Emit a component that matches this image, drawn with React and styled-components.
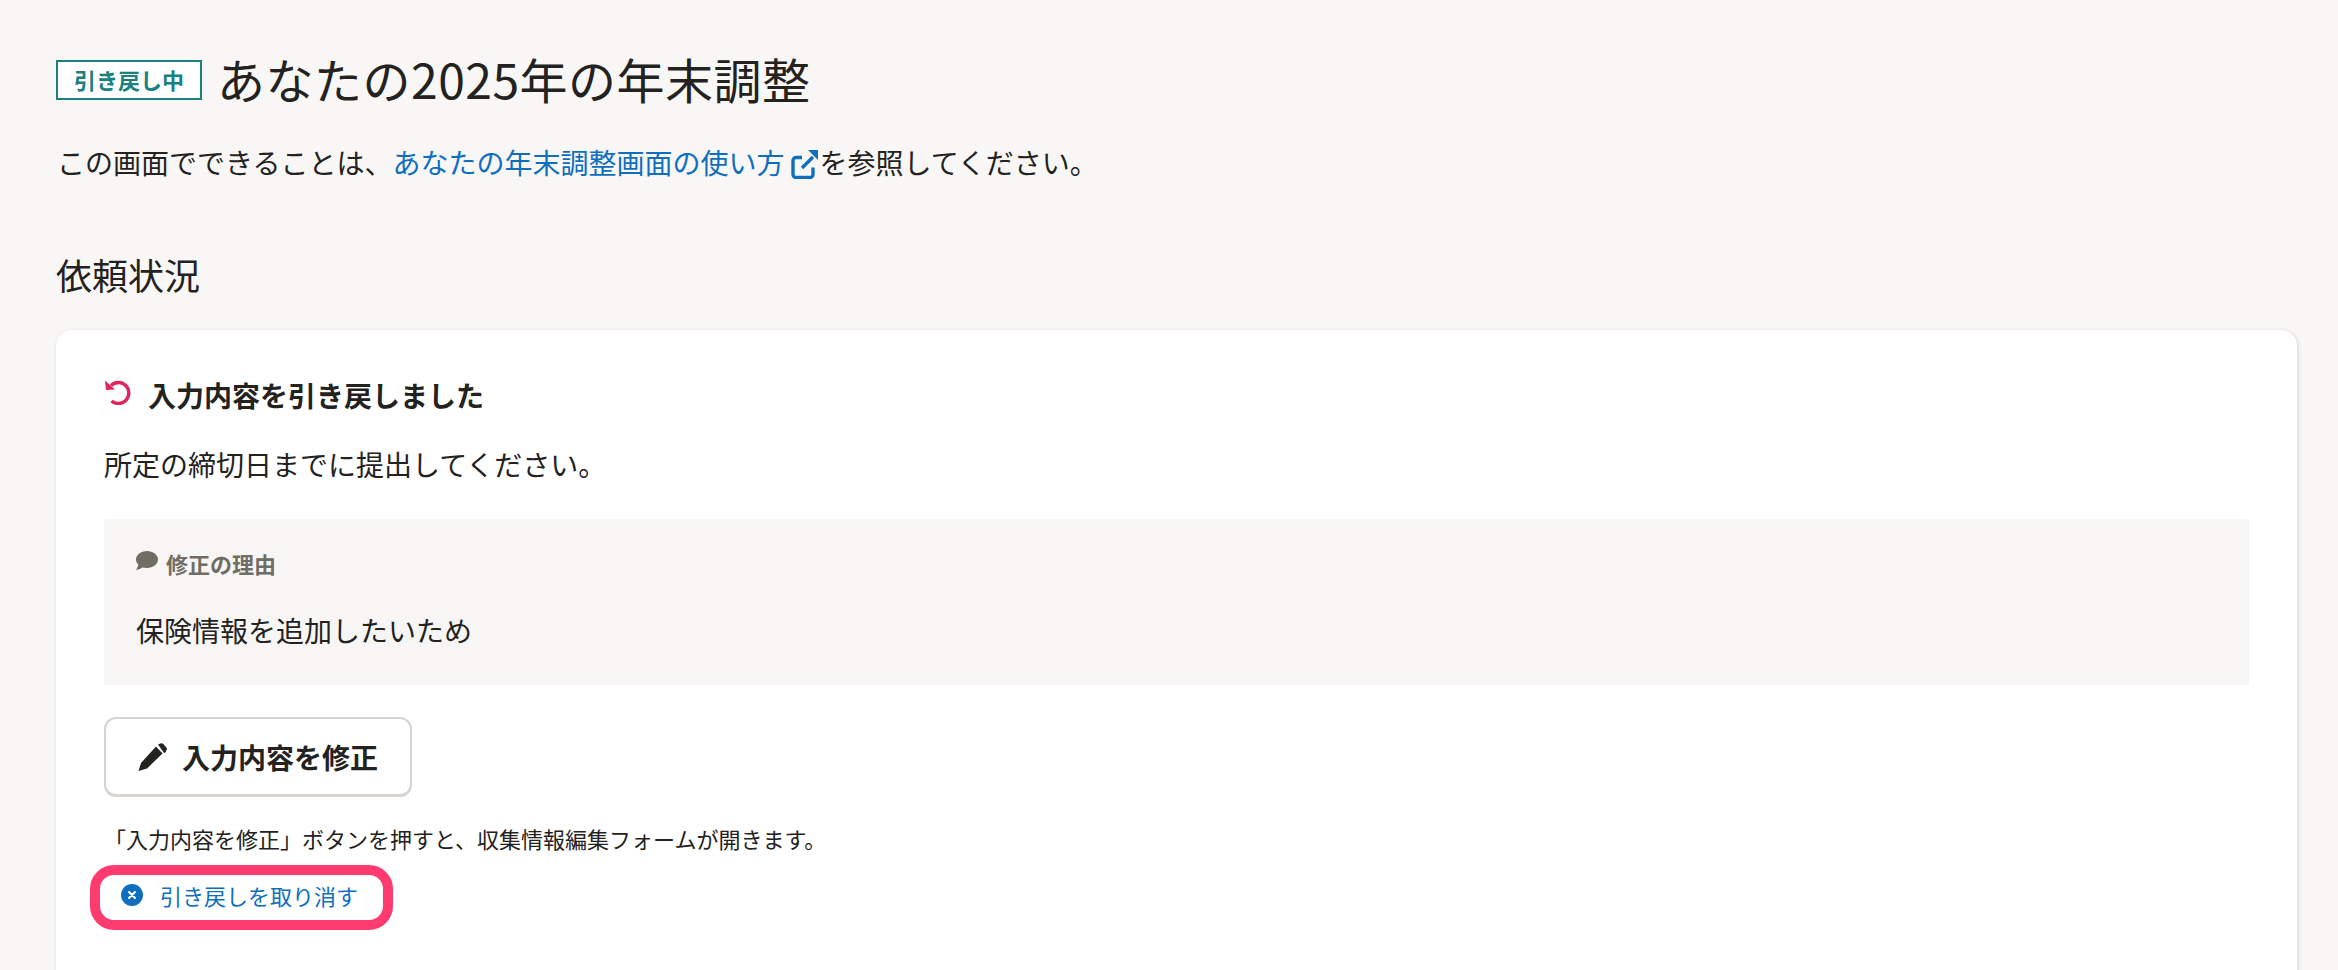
import React from 'react';
import styled, { createGlobalStyle } from 'styled-components';

const Global = createGlobalStyle`
  html, body { margin: 0; padding: 0; background: #f8f7f6; height: 970px; overflow: hidden; }
  body { font-family: "Noto Sans CJK JP", "Noto Sans", sans-serif; color: #23221e; }
`;
const Page = styled.main`
  padding: 52px 41px 0 56px;
  display: flex;
  flex-direction: column;
`;
const TitleRow = styled.div`
  display: flex;
  align-items: center;
  gap: 15px;
  height: 56px;
`;
const Badge = styled.span`
  box-sizing: border-box;
  width: 146px;
  height: 40px;
  border: 2px solid #1a8080;
  background: #fff;
  color: #1a8080;
  font-size: 22px;
  font-weight: 700;
  line-height: 34px;
  text-align: center;
`;
const Title = styled.h1`
  margin: -5px 0 0;
  font-size: 48px;
  font-weight: 400;
  line-height: 56px;
  letter-spacing: 0.5px;
`;
const Intro = styled.p`
  margin: 30px 0 0 1px;
  font-size: 28px;
  line-height: 48px;
  height: 48px;
`;
const Link = styled.a`
  color: #0f6fbd;
  display: inline-flex;
  align-items: center;
  gap: 7px;
`;
const SectionTitle = styled.h2`
  margin: 60px 0 0;
  font-size: 36px;
  font-weight: 400;
  line-height: 56px;
`;
const Card = styled.section`
  margin-top: 28px;
  background: #fff;
  border-radius: 16px;
  box-shadow: 1px 1px 4px rgba(60, 50, 40, 0.18);
  padding: 41px 48px 80px;
  height: 800px;
`;
const StatusRow = styled.div`
  display: flex;
  align-items: center;
  gap: 16px;
  height: 48px;
`;
const StatusTitle = styled.strong`
  font-size: 28px;
  font-weight: 700;
  line-height: 48px;
`;
const Body = styled.p`
  margin: 21px 0 0;
  font-size: 28px;
  line-height: 48px;
`;
const ReasonBox = styled.div`
  box-sizing: border-box;
  margin-top: 31px;
  height: 166px;
  background: #f7f6f4;
  padding: 28px 32px;
`;
const ReasonLabel = styled.div`
  display: flex;
  align-items: center;
  gap: 8px;
  color: #706d65;
  font-size: 22px;
  font-weight: 700;
  line-height: 32px;
`;
const ReasonText = styled.p`
  margin: 27px 0 0;
  font-size: 28px;
  line-height: 48px;
`;
const EditButton = styled.button`
  box-sizing: border-box;
  display: flex;
  align-items: center;
  gap: 15px;
  margin-top: 32px;
  width: 308px;
  height: 80px;
  padding: 0 32px;
  background: #fff;
  border: 2px solid #d6d3d0;
  border-bottom-width: 3px;
  border-radius: 12px;
  font: 700 28px "Noto Sans CJK JP", sans-serif;
  color: #23221e;
`;
const Note = styled.p`
  margin: 25px 0 0;
  font-size: 22px;
  line-height: 32px;
`;
const CancelRow = styled.div`
  position: relative;
  display: flex;
  align-items: center;
  gap: 17px;
  margin: 25px 0 0 17px;
  height: 32px;
  color: #0f6fbd;
  font-size: 22px;
  line-height: 32px;
`;
const Highlight = styled.span`
  position: absolute;
  left: -31px;
  top: -14px;
  width: 303px;
  height: 65px;
  box-sizing: border-box;
  border: 10px solid #ff3b70;
  border-radius: 24px;
`;

const ExternalIcon = () => (
  <svg width="28" height="30" viewBox="0 0 28 30" fill="none" stroke="#0f6fbd" strokeWidth="3.4" style={{ marginTop: 4 }}>
    <path d="M11 8.5H5a3 3 0 0 0-3 3v14a3 3 0 0 0 3 3h14a3 3 0 0 0 3-3v-7" />
    <path d="M11 19L22 8" />
    <path d="M17 1h10v10z" fill="#0f6fbd" stroke="none" />
  </svg>
);
const UndoIcon = () => (
  <svg width="28" height="28" viewBox="0 0 28 28" fill="none" stroke="#e0245e" strokeWidth="3.4" style={{ marginTop: -8 }}>
    <path d="M7 8.5A10.5 10.5 0 1 1 7.5 24" />
    <path d="M1 3.5L2 13l9-.5z" fill="#e0245e" stroke="none" />
  </svg>
);
const CommentIcon = () => (
  <svg width="22" height="20" viewBox="0 0 22 20" fill="#706d65" style={{ marginTop: -4 }}>
    <path d="M11 0C5 0 0 3.8 0 8.5c0 2 .9 3.8 2.4 5.2C2 15.6.6 17.6 0 19c2.8-.2 5-1.3 6.5-2.4 1.4.3 2.9.4 4.5.4 6 0 11-3.8 11-8.5S17 0 11 0z" />
  </svg>
);
const PenIcon = () => (
  <svg width="29" height="28" viewBox="0 0 29 28" fill="#23221e">
    <path d="M20 1.5l3-1.2a2 2 0 0 1 2 .5l3.4 3.6a2 2 0 0 1 .4 2.1L27.6 9a2 2 0 0 1-1.5 1.1z" />
    <path d="M.5 28L3 20 18 3.5l6.5 7L9 25.5z" />
  </svg>
);
const CancelIcon = () => (
  <svg width="22" height="22" viewBox="0 0 22 22">
    <circle cx="11" cy="11" r="11" fill="#0f6fbd" />
    <path d="M8 8l6 6M14 8l-6 6" stroke="#fff" strokeWidth="2" strokeLinecap="round" />
  </svg>
);

export default function App() {
  return (
    <>
      <Global />
      <Page>
        <TitleRow>
          <Badge>引き戻し中</Badge>
          <Title>あなたの2025年の年末調整</Title>
        </TitleRow>
        <Intro>
          この画面でできることは、
          <Link>あなたの年末調整画面の使い方<ExternalIcon /></Link>
          を参照してください。
        </Intro>
        <SectionTitle>依頼状況</SectionTitle>
        <Card>
          <StatusRow>
            <UndoIcon />
            <StatusTitle>入力内容を引き戻しました</StatusTitle>
          </StatusRow>
          <Body>所定の締切日までに提出してください。</Body>
          <ReasonBox>
            <ReasonLabel><CommentIcon />修正の理由</ReasonLabel>
            <ReasonText>保険情報を追加したいため</ReasonText>
          </ReasonBox>
          <EditButton><PenIcon />入力内容を修正</EditButton>
          <Note>「入力内容を修正」ボタンを押すと、収集情報編集フォームが開きます。</Note>
          <CancelRow>
            <CancelIcon />引き戻しを取り消す
            <Highlight />
          </CancelRow>
        </Card>
      </Page>
    </>
  );
}
